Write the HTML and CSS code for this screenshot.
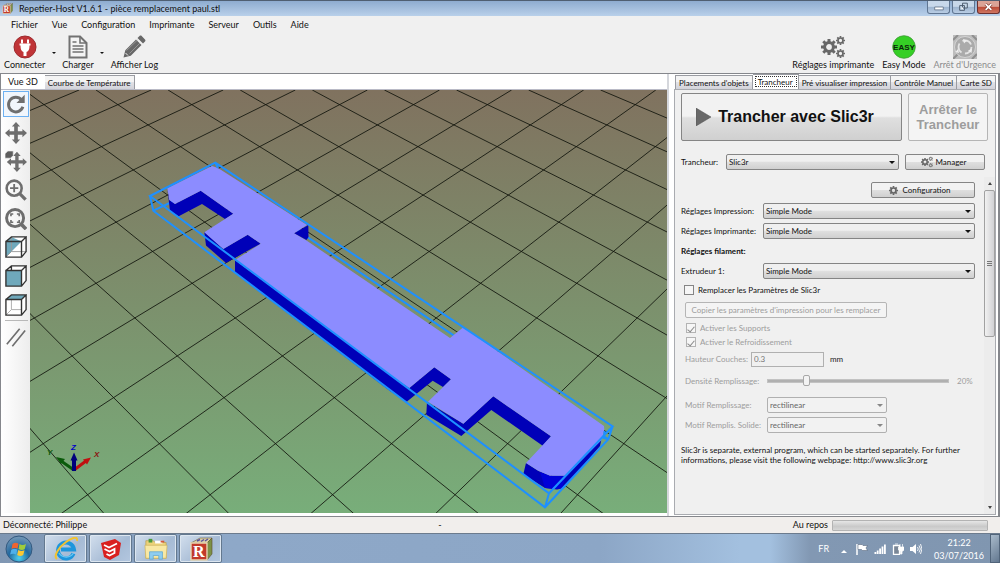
FILE: index.html
```html
<!DOCTYPE html>
<html lang="fr">
<head>
<meta charset="utf-8">
<title>Repetier-Host V1.6.1 - pièce remplacement paul.stl</title>
<link rel="stylesheet" href="styles.css">
</head>
<body>
<svg class="defs" aria-hidden="true">
  <defs>
    <symbol id="gear" viewBox="0 0 16 16">
      <circle cx="8" cy="8" r="4.4" fill="none" stroke="currentColor" stroke-width="3"/>
      <path d="M8 0v3M8 13v3M0 8h3M13 8h3M2.3 2.3l2.2 2.2M11.5 11.5l2.2 2.2M13.7 2.3l-2.2 2.2M4.5 11.5l-2.2 2.2" stroke="currentColor" stroke-width="3"/>
    </symbol>
    <symbol id="gears" viewBox="0 0 24 24">
      <use href="#gear" x="0" y="4" width="16" height="16"/>
      <use href="#gear" x="15" y="1" width="9" height="9"/>
      <use href="#gear" x="15" y="14" width="9" height="9"/>
    </symbol>
    <symbol id="rblock" viewBox="0 0 24 24">
      <path d="M2 6l9-5h12l-5 5z" fill="#d9cfa6" stroke="#6b5a3a" stroke-width=".6"/>
      <path d="M8 4l3-1.500M12 4.500l3-2M16 4l3-2" stroke="#5a4f9c" stroke-width="1.500"/>
      <path d="M18 6l5-5v16l-5 6z" fill="#7c9146" stroke="#5b4b2e" stroke-width=".6"/>
      <path d="M2 6h16v17H2z" fill="#c23a2b" stroke="#e8d8b4" stroke-width="1.400"/>
      <text x="4" y="20" class="block-letter">R</text>
    </symbol>
    <symbol id="moves" viewBox="0 0 24 24">
      <path d="M12 0l4.500 5H14v5h5V7.500l5 4.500-5 4.500V14h-5v5h2.500L12 24l-4.500-5H10v-5H5v2.500L0 12l5-4.500V10h5V5H7.500z" fill="#6e6e6e"/>
    </symbol>
  </defs>
</svg>

<header class="titlebar">
  <svg class="title-icon"><use href="#rblock"/></svg>
  <h1>Repetier-Host V1.6.1 - pièce remplacement paul.stl</h1>
  <div class="win-buttons">
    <button aria-label="Réduire"><svg viewBox="0 0 22 12"><path d="M7 6h9v3H7z" fill="#fff" stroke="#5a6b80" stroke-width=".8"/></svg></button>
    <button aria-label="Restaurer"><svg viewBox="0 0 22 12"><path d="M10 2h5v5h-5zM7 4.500h5v5H7z" fill="#c7d8ea" stroke="#4c5a6e"/><path d="M9 6.500h1.500v1.500H9z" fill="#fff"/></svg></button>
    <button class="close" aria-label="Fermer"><svg viewBox="0 0 22 12"><path d="M8 3l6 6M14 3l-6 6" stroke="#7c3027" stroke-width="3"/><path d="M8 3l6 6M14 3l-6 6" stroke="#fff" stroke-width="1.800"/></svg></button>
  </div>
</header>

<nav class="menubar">
  <button>Fichier</button><button>Vue</button><button>Configuration</button><button>Imprimante</button><button>Serveur</button><button>Outils</button><button>Aide</button>
</nav>

<div class="toolbar">
  <button class="tool tool-connect">
    <svg viewBox="0 0 24 24"><circle cx="12" cy="12" r="11" fill="#c03437" stroke="#9d2b2e"/><path d="M9 4.500v4M15 4.500v4" stroke="#fff" stroke-width="2"/><path d="M6.500 8.500h11v2h-1c0 4-1 6-3 6.500V21h-3v-4c-2-.5-3-2.500-3-6.500h-1z" fill="#fff"/></svg>
    <span>Connecter</span>
  </button>
  <button class="drop" aria-label="Options de connexion"></button>
  <button class="tool tool-load">
    <svg viewBox="0 0 24 24"><path d="M3.500 1.500H14l6.500 6.500v14.500h-17z" fill="#f4f4f4" stroke="#727272" stroke-width="2"/><path d="M14 1.500V8h6.500M6.500 11h11M6.500 14h11M6.500 17h11M6.500 7h4" fill="none" stroke="#727272" stroke-width="1.600"/></svg>
    <span>Charger</span>
  </button>
  <button class="drop" aria-label="Options de chargement"></button>
  <button class="tool tool-log">
    <svg viewBox="0 0 24 24"><path d="M1.500 22.500l1.800-7.200L14 4.500l5.500 5.500L8.800 20.700zM15.500 3l2-2c.7-.6 1.500-.6 2.200 0L23 4.400c.6.700.6 1.500 0 2.100l-2 2z" fill="#686868"/><path d="M4.500 15.500l11-10.500M7.500 18.500l10.500-10.500" stroke="#a0a0a0" stroke-width=".8"/><path d="M3.500 18l2.500 2.500" stroke="#efefef" stroke-width="1"/></svg>
    <span>Afficher Log</span>
  </button>
  <button class="tool tool-right">
    <svg class="gear-gray"><use href="#gears"/></svg>
    <span>Réglages imprimante</span>
  </button>
  <button class="tool">
    <svg viewBox="0 0 24 24"><circle cx="12" cy="12" r="11.300" fill="#35cf25" stroke="#3f9a36" stroke-width=".8"/><text x="12" y="15" text-anchor="middle" class="easy-text">EASY</text></svg>
    <span>Easy Mode</span>
  </button>
  <button class="tool" disabled>
    <svg viewBox="0 0 24 24"><path d="M0 0h24v24H0z" fill="#bdbdbd"/><path d="M0 5l5-5M0 24l5-5M19 0l5 5M19 24l5-5" stroke="#8f8f8f" stroke-width="2"/><circle cx="12" cy="12" r="10.500" fill="#ababab" stroke="#d4d4d4"/><circle cx="12" cy="12" r="6.500" fill="none" stroke="#e4e4e4" stroke-width="1.800" stroke-dasharray="10 3.600"/><path d="M10 4l4 1.500-3 3zM19 14l-4 1.500 3.500 2.500zM5 14l1 4-3.500-1z" fill="#eee"/></svg>
    <span>Arrêt d'Urgence</span>
  </button>
</div>

<main class="main">
  <section class="left">
    <div class="tabs" role="tablist">
      <button class="tab active" role="tab" aria-selected="true">Vue 3D</button><button class="tab" role="tab">Courbe de Température</button>
    </div>
    <div class="view">
      <div class="view-side">
      <div class="view-tools">
        <button class="selected" aria-label="Rotation"><svg viewBox="0 0 24 24"><path d="M18 7.500A8 8 0 1 0 19.500 15" fill="none" stroke="#6e6e6e" stroke-width="3.200"/><path d="M21.500 2v9h-9z" fill="#6e6e6e"/></svg></button>
        <button aria-label="Déplacer la vue"><svg><use href="#moves"/></svg></button>
        <button aria-label="Déplacer l'objet"><svg viewBox="0 0 24 24"><use href="#moves" x="2" y="2" width="22" height="22"/><path d="M0 4l3-3h6v5l-3 3H0z" fill="#5e5e5e" stroke="#eee" stroke-width=".8"/></svg></button>
        <button aria-label="Zoom"><svg viewBox="0 0 24 24"><circle cx="10" cy="10" r="8.200" fill="none" stroke="#6e6e6e" stroke-width="2.800"/><path d="M16 16l6.500 6.500" stroke="#6e6e6e" stroke-width="3.600"/><path d="M10 5.500v9M5.500 10h9" stroke="#6e6e6e" stroke-width="2"/></svg></button>
        <button aria-label="Ajuster la vue"><svg viewBox="0 0 24 24"><circle cx="11" cy="11" r="9.300" fill="none" stroke="#6e6e6e" stroke-width="3.200"/><path d="M17.500 17.500l5.500 5.500" stroke="#6e6e6e" stroke-width="4"/><path d="M6.500 9V6.500H9M13 6.500h2.500V9M15.500 13v2.500H13M9 15.500H6.500V13" fill="none" stroke="#6e6e6e" stroke-width="1.800"/></svg></button>
        <button aria-label="Vue isométrique"><svg viewBox="0 0 24 24"><path d="M1 6h17v17H1zM1 6l6-5h16v16l-5 6" fill="#fff"/><path d="M1 23V6l6-5 11 5z" fill="#6fa8bb"/><path d="M7 1v16h16M7 17l-6 6" fill="none" stroke="#999"/><path d="M1 6h17v17H1zM1 6l6-5h16l-5 5M23 1v16l-5 6" fill="none" stroke="#333" stroke-width="1.500"/></svg></button>
        <button aria-label="Vue de face"><svg viewBox="0 0 24 24"><path d="M1 6l6-5h16v16l-5 6z" fill="#fff"/><path d="M1 6h17v17H1z" fill="#6fa8bb"/><path d="M1 6h17v17H1zM1 6l6-5h16l-5 5M23 1v16l-5 6M7 1v5" fill="none" stroke="#333" stroke-width="1.500"/></svg></button>
        <button aria-label="Vue de dessus"><svg viewBox="0 0 24 24"><path d="M1 6h17v17H1zM18 6l5-5v16l-5 6z" fill="#fff"/><path d="M1 6l6-5h16l-5 5z" fill="#6fa8bb"/><path d="M7 6v11h11M7 17l-6 6" fill="none" stroke="#aaa"/><path d="M1 6h17v17H1zM1 6l6-5h16l-5 5M23 1v16l-5 6" fill="none" stroke="#333" stroke-width="1.500"/></svg></button>
        <hr>
        <button aria-label="Projection parallèle"><svg viewBox="0 0 24 24"><path d="M2 20L16 3M8 22L22 5" stroke="#6e6e6e" stroke-width="1.800"/></svg></button>
      </div>
      </div>
      <svg class="scene" viewBox="30 90 637 424" preserveAspectRatio="xMinYMin slice" role="img" aria-label="Pièce sur le plateau">
        <defs>
          <linearGradient id="sky" x1="0" y1="0" x2="0" y2="1"><stop offset="0" stop-color="#80725f"/><stop offset="1" stop-color="#78ae7a"/></linearGradient>
        </defs>
        <path d="M30 90h1400v424H30z" fill="url(#sky)"/>
        <path class="grid" d="M-264.400 90L104.400 514M-192.300 90L229.300 514M-120.200 90L354.200 514M-48.100 90L479 514M24 90L603.900 514M96 90L728.800 514M168.100 90L853.700 514M240.200 90L978.500 514M312.300 90L1103.400 514M384.400 90L1228.300 514M456.500 90L1353.100 514M528.600 90L1478 514M600.600 90L1602.900 514M944.100 90L560.100 514M872 90L435.200 514M799.900 90L310.300 514M727.800 90L185.500 514M655.800 90L60.600 514M583.700 90L-64.300 514M511.600 90L-189.200 514M439.500 90L-314 514M367.400 90L-438.900 514M295.300 90L-563.800 514M223.200 90L-688.700 514M151.200 90L-813.500 514M79.100 90L-938.400 514"/>
        <path class="bbox" d="M153.300 210.700L176 200M218 177L608.300 439.300"/>
        <path class="side" d="M167.300 188L169.300 200 175 204 200.700 190.700 233.300 213.700 225 219 202 204 178.700 216.300 170 211zM204.300 232L223.300 249 247.700 234.700 260.700 243.700 253 247.700 226 263 206 245.500zM235 260L409.300 388 434.300 367.300 451 379.300 443 387 432.700 380.700 406.700 401.700 390 391 235 273zM427 402L463.300 423.700 493.300 396.300 551 436.300 542.700 445.700 491.300 410 461.300 436 426.300 414.700z"/>
        <path class="side" d="M526 463L538 470.700 550 475.700H566L601.700 438 600 446 564 488 557 489.500 545 488 523.300 474.300z"/>
        <path d="M540 472l10 3.700h16l-4 12.300-5 1-12-1z" fill="#0000d8"/>
        <path class="top" d="M212 166L218 168 307 225 294.300 233.300 305.700 240 400 304 450 338 463.300 327.300 604 426 604.300 430 601.700 440 565.700 475.700H550L538.300 470.700 526 463 551 436.300 493.300 396.300 463.300 423.700 428 401.700 451 379.300 434.300 367.300 409.300 388 390 375 235 260 260.700 243.700 247.700 234.700 223.300 249 204.300 232.300 233.300 213.700 200.700 190.700 175 204 169.300 200 167.300 188.300z"/>
        <path class="side" d="M294.300 233.300L308.300 225 308.500 237 306.500 240z"/>
        <path class="bbox" d="M150 196L215.300 162.700 612.700 426.300 549 493.300zL153.300 210.700 545 507.300 608.300 439.300 612.700 426.300M549 493.300L545 507.300M215.300 162.700L218 168M604.500 431L604 438 608.300 439.300"/>
        <g stroke-width="3">
          <path d="M74 470L61 461" stroke="#0a5a0a"/><path d="M56 457l9 2-4 5z" fill="#0a5a0a"/>
          <path d="M74 470L86 461" stroke="#c01010"/><path d="M91 457.500l-8 2 4 5z" fill="#c01010"/>
          <path d="M74 471V458" stroke="#00007c" stroke-width="4"/><path d="M74 452.500l-3.500 8h7z" fill="#00007c"/>
        </g>
        <text class="axis" x="71" y="450" fill="#0000c8">Z</text><text class="axis" x="94" y="457" fill="#8c1010">X</text><text class="axis" x="47" y="455" fill="#0a5a0a">Y</text>
      </svg>
    </div>
  </section>

  <section class="right">
    <div class="tabs" role="tablist">
      <button class="tab" role="tab">Placements d'objets</button><button class="tab active focus" role="tab" aria-selected="true">Trancheur</button><button class="tab" role="tab">Pré visualiser impression</button><button class="tab" role="tab">Contrôle Manuel</button><button class="tab" role="tab">Carte SD</button>
    </div>
    <div class="panel">
      <div class="actions">
        <button class="btn slice"><svg viewBox="0 0 15 18"><path d="M0 0l15 9L0 18z" fill="#696969" stroke="#4e4e4e" stroke-width=".5"/></svg>Trancher avec Slic3r</button>
        <button class="btn stop" disabled>Arrêter le Trancheur</button>
      </div>
      <div class="slicer-row">
        <label for="slicer">Trancheur:</label>
        <span class="combo"><select id="slicer"><option>Slic3r</option></select></span>
        <button class="btn"><svg class="mini"><use href="#gears"/></svg>Manager</button>
      </div>
      <div class="scroll-area">
        <div class="form">
          <button class="btn config"><svg class="mini small"><use href="#gear"/></svg>Configuration</button>
          <div class="fields">
            <label for="print">Réglages Impression:</label><span class="combo"><select id="print"><option>Simple Mode</option></select></span>
            <label for="printer">Réglages Imprimante:</label><span class="combo"><select id="printer"><option>Simple Mode</option></select></span>
            <strong>Réglages filament:</strong>
            <label for="extruder">Extrudeur 1:</label><span class="combo"><select id="extruder"><option>Simple Mode</option></select></span>
          </div>
          <label class="check"><input type="checkbox"><span>Remplacer les Paramètres de Slic3r</span></label>
          <div class="override">
            <button class="btn copy" disabled>Copier les paramètres d'impression pour les remplacer</button>
            <label class="check inner"><input type="checkbox" checked disabled><span>Activer les Supports</span></label>
            <label class="check inner"><input type="checkbox" checked disabled><span>Activer le Refroidissement</span></label>
            <div class="line height-line"><label for="layer">Hauteur Couches:</label><input id="layer" type="text" value="0.3" disabled><span class="unit">mm</span></div>
            <div class="line density-line"><label for="density">Densité Remplissage:</label><input id="density" type="range" min="0" max="100" value="20" disabled><output for="density">20%</output></div>
            <div class="line"><label for="fill">Motif Remplissage:</label><span class="combo off"><select id="fill" disabled><option>rectilinear</option></select></span></div>
            <div class="line"><label for="solid">Motif Remplis. Solide:</label><span class="combo off"><select id="solid" disabled><option>rectilinear</option></select></span></div>
          </div>
          <p class="note">Slic3r is separate, external program, which can be started separately. For further informations, please visit the following webpage: http://www.slic3r.org</p>
        </div>
        <div class="scrollbar"><i class="arrow up"></i><span class="thumb"></span><i class="arrow"></i></div>
      </div>
    </div>
  </section>
</main>

<footer class="status">
  <span>Déconnecté: Philippe</span><span class="dash">-</span><span class="idle" id="idle">Au repos</span><progress value="0" max="100" aria-labelledby="idle"></progress>
</footer>

<nav class="taskbar">
  <button class="start" aria-label="Démarrer"><svg viewBox="0 0 28 28">
    <defs><radialGradient id="orb" cx=".5" cy=".85" r=".8"><stop offset="0" stop-color="#4fd0ee"/><stop offset=".5" stop-color="#2169a0"/><stop offset="1" stop-color="#6f94b4"/></radialGradient></defs>
    <circle cx="14" cy="14" r="13" fill="url(#orb)" stroke="#33597f"/>
    <path d="M7.500 9c2-1.500 4-1.500 6-.3l-1 5c-2-1-4-1-6 .2z" fill="#f0642f"/><path d="M14.500 9c2 1.200 4 1.200 6.500 0l-1.300 5.300c-2 1.200-4 1-6.200-.3z" fill="#9fcc3b"/><path d="M6.300 14.700c2-1.200 4-1.200 6-.1l-1.200 5c-2-1.200-4-1-6 0z" fill="#4fb0ea"/><path d="M13.300 15c2 1.200 4 1.200 6.200.2L18.200 20c-2 1.200-4 1.200-6-.1z" fill="#fbc733"/>
  </svg></button>
  <button class="task" aria-label="Internet Explorer"><svg viewBox="0 0 24 24"><path d="M19.500 16.500A8 8 0 1 1 20 12.500H7" fill="none" stroke="#1e96dc" stroke-width="4"/><path d="M19.500 16A8.500 8.500 0 0 1 5 16" fill="none" stroke="#6cc9f3" stroke-width="1.200"/><path d="M3 22c-4-3 2-12 9-17s12-6 11-1" fill="none" stroke="#f1c232" stroke-width="2"/></svg></button>
  <button class="task" aria-label="SketchUp"><svg viewBox="0 0 24 24"><path d="M2 6l14-4 6 4-2 12-9 5-6-3z" fill="#d9201f"/><path d="M5 8l5 2.500 8-4M5.500 12l5 2.500 5-2.500v4l-5 2.500-3-1.500" fill="none" stroke="#fff" stroke-width="1.800"/></svg></button>
  <button class="task" aria-label="Explorateur"><svg viewBox="0 0 26 24"><path d="M2 3h8l2 2h12v17H2z" fill="#ecd27a" stroke="#b99b45" stroke-width=".7"/><path d="M5 1h4v4H5z" fill="#4b9b3b"/><path d="M12 3h8v3h-8z" fill="#fff"/><path d="M18 3h4v2h-4z" fill="#d45a3a"/><path d="M1 8h24l-1 14H2z" fill="#f8e8a4" stroke="#cdb25e" stroke-width=".7"/><path d="M6 23v-8h14v8h-4v-4h-6v4z" fill="#8ecdf0" stroke="#5ea6d0" stroke-width=".8"/></svg></button>
  <button class="task" aria-label="Repetier-Host"><svg><use href="#rblock"/></svg></button>
  <div class="tray">
    <span class="lang">FR</span>
    <svg class="tray-up" viewBox="0 0 6 4"><path d="M0 4l3-3 3 3z" fill="#fff"/></svg>
    <svg viewBox="0 0 12 12"><path d="M1 1v11" stroke="#fff" stroke-width="1.500"/><path d="M2 1.500h4l1 1h4.500L10 5l1.500 2.500H6.500l-1-1H2z" fill="#fff" stroke="#4b5b70" stroke-width=".5"/></svg>
    <svg viewBox="0 0 12 12"><path d="M.5 9h1.800v2H.5zM2.800 7.500h1.800V11H2.800zM5.200 5.500H7V11H5.200zM7.600 3.500h1.800V11H7.600zM10 1.500h1.800V11H10z" fill="#fff"/></svg>
    <svg viewBox="0 0 12 12"><path d="M1.500 2.500h6v9h-6z" fill="#7a8797" stroke="#fff" stroke-width="1.300"/><path d="M3 1h3M8 1v3M10.500 1v3M6.500 4H12v3l-2 1.500V11H8.500V8.500L6.500 7z" fill="#fff" stroke="#fff" stroke-width=".7"/></svg>
    <svg viewBox="0 0 12 12"><path d="M0 4h2.500L6 1v10L2.500 8H0z" fill="#fff"/><path d="M7.500 4q1.500 2 0 4M9 2.500q2.800 3.500 0 7M10.500 1q3 5 0 10" fill="none" stroke="#fff" stroke-width=".9"/></svg>
    <time>21:22<br>03/07/2016</time>
    <button class="peek" aria-label="Afficher le bureau"></button>
  </div>
</nav>
</body>
</html>
```
FILE: styles.css
```css
* { box-sizing: border-box; }
html, body { height: 100%; }
body {
  margin: 0;
  display: flex;
  flex-direction: column;
  overflow: hidden;
  background: #f0f0f0;
  color: #111;
  font: 9px/12px Lato, "Noto Sans", sans-serif;
}
button, input, select { font: inherit; color: inherit; margin: 0; }
button { padding: 0; border: 0; background: none; }
.defs { position: absolute; width: 0; height: 0; }
.block-letter { font: bold 16px "Liberation Serif", serif; fill: #fff; }
.easy-text { font: bold 8px "Liberation Sans", sans-serif; fill: #0b220b; }
.axis { font: italic bold 8px "Liberation Sans", sans-serif; }

.titlebar {
  flex: none;
  height: 16px;
  display: flex;
  align-items: center;
  padding-left: 2px;
  background: linear-gradient(#8eacd0, #b9d0ea);
  border-top: 1px solid #4f5f72;
}
.title-icon { width: 11px; height: 11px; margin-right: 6px; }
.titlebar h1 { margin: 0; font-size: 9px; font-weight: 400; }
.win-buttons { margin-left: auto; align-self: flex-start; display: flex; gap: 2px; }
.win-buttons button {
  width: 23px;
  height: 13px;
  border: 1px solid #5f7591;
  border-top: 0;
  border-radius: 0 0 3px 3px;
  background: linear-gradient(#c8d8ea 45%, #9db4cf 50%, #b9cde4);
}
.win-buttons svg { display: block; width: 21px; height: 12px; }
.win-buttons .close { background: linear-gradient(#dba396 45%, #bd4a35 50%, #cf7662); border-color: #6b3030; }

.menubar { flex: none; height: 17px; display: flex; align-items: center; gap: 14px; padding-left: 11px; }
.toolbar { flex: none; height: 40px; display: flex; align-items: flex-start; padding: 2px 4px 0; }
.tool { display: flex; flex-direction: column; align-items: center; }
.tool svg { width: 24px; height: 24px; color: #686868; }
.tool span { line-height: 12px; }
.tool:disabled { color: #8c8c8c; }
.tool + .tool { margin-left: 8px; }
.toolbar .tool-right { margin-left: auto; }
.drop { width: 17px; height: 36px; display: flex; align-items: center; justify-content: center; }
.drop::after { content: ""; border: 2px solid transparent; border-top-color: #111; border-bottom: 0; }

.main { flex: 1; min-height: 0; display: flex; gap: 5px; border-top: 1px solid #85878c; border-left: 1px solid #85878c; border-bottom: 1px solid #85878c; background: #fff; }
.left { flex: 1; min-width: 0; display: flex; flex-direction: column; border-right: 2px solid #d5d7dc; }
.right { flex: 0 0 326px; min-width: 0; display: flex; flex-direction: column; border-right: 2px solid #85878c; }
.tabs { flex: none; height: 15px; display: flex; align-items: flex-end; padding-left: 1px; font: 8px/12px Lato, "Liberation Sans", sans-serif; }
.left .tabs { padding-left: 0; }
.tab { flex: none; height: 14px; padding: 0 3px; border: 1px solid #9a9ca2; border-bottom: 0; border-left-width: 0; background: linear-gradient(#f4f4f4 45%, #e2e2e6 50%, #d2d3da); white-space: nowrap; }
.tab:first-child { border-left-width: 1px; }
.tab.active { height: 15px; background: #fff; }
.left .tab.active { padding: 0 6px; border-color: #fff; font-size: 9px; }
.tab.focus { outline: 1px dotted #333; outline-offset: -3px; padding: 0 5px; }

.view { flex: 1; min-height: 0; display: flex; border-top: 1px solid #b9bac6; border-bottom: 3px solid #fff; }
.view-side { flex: 0 0 29px; padding: 1px 1px 0 2px; background: linear-gradient(90deg, #fff, #ededed); }
.view-tools { height: 259px; display: flex; flex-direction: column; align-items: center; justify-content: space-between; }
.view-tools button { width: 26px; height: 26px; display: grid; place-items: center; }
.view-tools .selected { border: 1px solid #6db1f2; background: #f1f6fc; }
.view-tools svg { width: 22px; height: 22px; }
.view-tools hr { width: 23px; margin: 0; border: 0; border-top: 1px solid #b8b8b8; }
.scene { flex: 1; min-width: 0; width: 100%; height: 100%; display: block; }
.grid { stroke: #10140c; stroke-width: 1; fill: none; opacity: .85; }
.side { fill: #0000b8; }
.top { fill: #8c8cff; }
.bbox { stroke: #1e90ff; stroke-width: 2; fill: none; }

.panel {
  flex: 1;
  min-height: 0;
  display: flex;
  flex-direction: column;
  margin: 0 2px 1px 0;
  padding: 3px 0 0 6px;
  border: 1px solid #a9abb0;
  background: #f0f0f0;
  font: 8px/10px Lato, "Liberation Sans", sans-serif;
}
.btn {
  display: flex;
  align-items: center;
  justify-content: center;
  height: 16px;
  border: 1px solid #858585;
  border-radius: 2px;
  background: linear-gradient(#f2f2f2 48%, #dfdfdf 52%, #d0d0d0);
}
.btn:disabled { color: #9d9d9d; background: #f4f4f4; border-color: #b5b5b5; }
.actions { display: flex; gap: 6px; padding-right: 7px; }
.actions .btn { height: 48px; font-weight: 700; font-family: "Liberation Sans", sans-serif; }
.slice { flex: 1; gap: 7px; padding-right: 13px; font-size: 16px; }
.slice svg { width: 15px; height: 18px; }
.actions .stop { flex: 0 0 80px; font-size: 13px; line-height: 15px; }
.slicer-row { display: grid; grid-template-columns: 39px 1fr 80px; column-gap: 6px; align-items: center; margin-top: 13px; padding-right: 10px; }
.slicer-row .btn { gap: 3px; padding-right: 3px; }
.mini { width: 12px; height: 12px; color: #666; }
.mini.small { width: 9px; height: 9px; }

.combo { position: relative; display: block; height: 16px; }
.combo select {
  display: block;
  width: 100%;
  height: 16px;
  padding: 0 12px 0 2px;
  appearance: none;
  border: 1px solid #858585;
  border-radius: 2px;
  background: linear-gradient(#f0f0f0 45%, #e0e0e0 50%, #d0d0d0);
  opacity: 1;
}
.combo::after { content: ""; position: absolute; right: 4px; top: 7px; border: 3px solid transparent; border-top-color: #111; border-bottom: 0; pointer-events: none; }
.combo.off select { background: #f2f2f2; border-color: #b0b0b0; color: #666; }
.combo.off::after { border-top-color: #888; }

.scroll-area { flex: 1; min-height: 0; display: flex; margin-top: 7px; }
.form { flex: 1; min-width: 0; padding: 5px 9px 0 0; }
.config { width: 104px; margin-left: auto; gap: 4px; padding-right: 6px; }
.fields { display: grid; grid-template-columns: 82px 1fr; grid-auto-rows: 20px; align-items: center; margin-top: 3px; }
.fields strong { grid-column: 1 / -1; }
.check { display: flex; align-items: center; gap: 4px; height: 16px; margin: 1px 0 0 3px; }
.check input { appearance: none; width: 10px; height: 10px; border: 1px solid #858585; background: #f6f6f6; display: grid; place-items: center; }
.check input:disabled { border-color: #b3b3b3; }
.check input:checked::after { content: ""; width: 3px; height: 6px; border: solid #8a8a8a; border-width: 0 1px 1px 0; transform: rotate(40deg); }
.override { color: #9d9d9d; padding-left: 4px; }
.copy { width: 202px; margin: 4px 0 3px; }
.inner { height: 14px; margin: 0 0 0 1px; }
.line { display: flex; align-items: center; height: 20px; white-space: nowrap; }
.line label { flex: 0 0 82px; }
.line .combo { width: 120px; }
.height-line label { flex-basis: 66px; }
.height-line input { width: 73px; height: 15px; padding: 0 2px; border: 1px solid #b0b0b0; background: #f0f0f0; color: #777; }
.unit { color: #222; margin-left: 6px; }
.density-line { height: 24px; margin-bottom: 2px; }
.density-line output { margin-left: 8px; }
input[type="range"] { appearance: none; width: 182px; height: 12px; background: none; }
input[type="range"]::-webkit-slider-runnable-track { height: 4px; background: #b0b0b0; border: 1px solid #c2c2c2; }
input[type="range"]::-webkit-slider-thumb { appearance: none; width: 7px; height: 11px; margin-top: -5px; border: 1px solid #a8a8a8; border-radius: 2px; background: #f3f3f3; }
.note { margin: 10px 0 0; }
.scrollbar { flex: 0 0 11px; display: flex; flex-direction: column; align-items: center; background: #ececec; }
.arrow { flex: none; margin: 5px 0; border: 2px solid transparent; border-top: 3px solid #444; border-bottom: 0; }
.arrow.up { border-top: 0; border-bottom: 3px solid #444; }
.thumb { width: 11px; height: 147px; border: 1px solid #a1a1a1; border-radius: 2px; background: linear-gradient(90deg, #f1f1f1, #d1d1d4); display: grid; place-items: center; }
.thumb::after { content: ""; width: 5px; height: 6px; background: repeating-linear-gradient(#777 0 1px, transparent 1px 2px); }
.scrollbar .arrow:last-child { margin-top: auto; }

.status { flex: none; height: 16px; display: flex; align-items: center; padding: 0 12px 0 3px; background: #f1eeec; }
.dash { margin: 0 auto; }
.idle { margin-right: 4px; }
.status progress { appearance: none; width: 156px; height: 11px; border: 1px solid #b3b3b3; border-radius: 1px; }
.status progress::-webkit-progress-bar { background: linear-gradient(#e6e6e6, #c9c9c9 60%, #d6d6d6); }

.taskbar {
  flex: none;
  height: 30px;
  display: flex;
  gap: 2px;
  border-top: 1px solid #6c7b8d;
  background: linear-gradient(90deg, #8097b3, #8ea8c8 23%, #8ca6c6 60%, #a3c0df 74%, #a3c0df 77%, #8298b3 81%, #8096b0);
}
.start { width: 42px; display: grid; place-items: center; padding-right: 4px; }
.start svg { width: 28px; height: 28px; }
.task { width: 43px; display: grid; place-items: center; border: 1px solid #63788f; border-radius: 2px; background: linear-gradient(135deg, #d3dfed, #a6bbd5 60%, #b3c7df); box-shadow: inset 0 0 0 1px #dce6f0; }
.task svg { width: 24px; height: 24px; }
.tray { margin-left: auto; display: flex; align-items: center; gap: 6px; color: #fff; }
.tray svg { width: 12px; height: 12px; }
.tray .tray-up { width: 6px; height: 4px; margin: 4px 3px 0 6px; }
.tray time { text-align: center; line-height: 13px; margin-left: 6px; }
.peek { width: 10px; align-self: stretch; border: 1px solid #51647a; background: linear-gradient(135deg, #a9bacb, #637890); }
```
